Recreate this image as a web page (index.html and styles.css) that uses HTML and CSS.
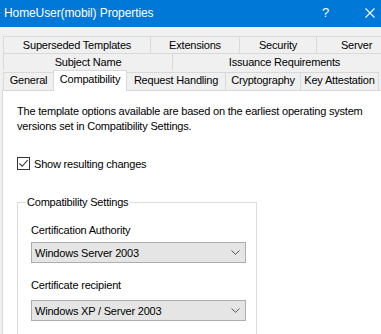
FILE: index.html
```html
<!DOCTYPE html>
<html lang="en">

<head>
    <meta charset="UTF-8">
    <meta name="viewport" content="width=device-width, initial-scale=1.0">
    <title>HomeUser(mobil) Properties</title>
    <link rel="stylesheet" href="styles.css">
</head>

<body>

    <div class="dialog">
        <div class="titlebar">
            <span class="title">HomeUser(mobil) Properties</span>
            <span class="help">?</span>
            <span class="close">
                <svg width="10" height="10" viewBox="0 0 10 10">
                    <path d="M0.5 0.5 L9.5 9.5 M9.5 0.5 L0.5 9.5" stroke="#fff" stroke-width="1.1" />
                </svg>
            </span>
        </div>

        <div class="tabs">
            <div class="tab-row">
                <div class="tab" style="width: 147px">Superseded Templates</div>
                <div class="tab" style="width: 89px">Extensions</div>
                <div class="tab" style="width: 77px">Security</div>
                <div class="tab" style="width: 80px">Server</div>
            </div>
            <div class="tab-row">
                <div class="tab" style="width: 169px">Subject Name</div>
                <div class="tab" style="width: 224px">Issuance Requirements</div>
            </div>
            <div class="tab-row front">
                <div class="tab" style="width: 50px">General</div>
                <div class="tab selected" style="width: 74px">Compatibility</div>
                <div class="tab" style="width: 98px">Request Handling</div>
                <div class="tab" style="width: 75px">Cryptography</div>
                <div class="tab" style="width: 79px">Key Attestation</div>
            </div>
        </div>

        <div class="panel">
            <p class="intro">The template options available are based on the earliest operating system<br>versions set in Compatibility Settings.</p>

            <label class="check">
                <span class="box">
                    <svg width="11" height="11" viewBox="0 0 11 11">
                        <path d="M1.5 5.5 L4.2 8.3 L9.6 2.2" fill="none" stroke="#333" stroke-width="1.1" />
                    </svg>
                </span>
                Show resulting changes
            </label>

            <fieldset class="group">
                <legend>Compatibility Settings</legend>

                <div class="field-label first">Certification Authority</div>
                <div class="combo">
                    <span>Windows Server 2003</span>
                    <svg width="9" height="5" viewBox="0 0 9 5">
                        <path d="M0.5 0.5 L4.5 4.3 L8.5 0.5" fill="none" stroke="#555" stroke-width="1" />
                    </svg>
                </div>

                <div class="field-label">Certificate recipient</div>
                <div class="combo">
                    <span>Windows XP / Server 2003</span>
                    <svg width="9" height="5" viewBox="0 0 9 5">
                        <path d="M0.5 0.5 L4.5 4.3 L8.5 0.5" fill="none" stroke="#555" stroke-width="1" />
                    </svg>
                </div>
            </fieldset>
        </div>
    </div>

</body>

</html>
```

FILE: styles.css
```css
body {
    margin: 0;
    width: 381px;
    height: 334px;
    overflow: hidden;
    background-color: #f0f0f0;
    font-family: "Liberation Sans", Arial, sans-serif;
    font-size: 11px;
    letter-spacing: -0.2px;
    color: #000000;
}

.dialog {
    width: 420px;
}

.titlebar {
    height: 27px;
    background-color: #0078d7;
    color: #ffffff;
    display: flex;
    align-items: center;
    padding-left: 4px;
}

.title {
    flex: 1;
    font-size: 12px;
    letter-spacing: -0.1px;
    margin-top: -2px;
}

.help {
    width: 43px;
    font-size: 13px;
    margin-top: -2px;
}

.close {
    width: 55px;
    display: flex;
    align-items: center;
    margin-top: -2px;
}

.tabs {
    padding: 9px 0 0 3px;
}

.tab-row {
    display: flex;
    height: 17px;
}

.tab {
    box-sizing: border-box;
    border: 1px solid #d9d9d9;
    border-right: none;
    border-bottom: none;
    text-align: center;
    line-height: 16px;
    white-space: nowrap;
    background-color: #f0f0f0;
}

.tab-row.front {
    height: 20px;
    align-items: flex-end;
}

.tab-row.front .tab {
    height: 18px;
    line-height: 15px;
}

.tab-row.front .tab.selected {
    height: 21px;
    margin-bottom: -1px;
    background-color: #ffffff;
    border-right: 1px solid #d9d9d9;
    position: relative;
    z-index: 1;
    line-height: 17px;
}

.tab-row.front .tab.selected + .tab {
    border-left: none;
}

.tab-row.front .tab:last-child {
    border-right: 1px solid #d9d9d9;
}

.panel {
    margin-left: 2px;
    background-color: #ffffff;
    border: 1px solid #d9d9d9;
    height: 300px;
    padding: 13px 0 0 14px;
}

.intro {
    margin: 0;
    line-height: 15px;
    white-space: nowrap;
}

.check {
    display: flex;
    align-items: center;
    height: 15px;
    margin-top: 22px;
    gap: 4px;
}

.box {
    box-sizing: border-box;
    width: 13px;
    height: 13px;
    border: 1px solid #333333;
    display: flex;
    align-items: center;
    justify-content: center;
}

.group {
    box-sizing: border-box;
    margin: 24px 0 0 0;
    width: 240px;
    border: 1px solid #dcdcdc;
    padding: 0 9px 20px 13px;
}

.group legend {
    line-height: 14px;
    padding: 0 1px;
    margin-left: -5px;
}

.field-label {
    line-height: 14px;
    margin-top: 15px;
    margin-bottom: 8px;
}

.field-label.first {
    margin-top: 14px;
    margin-bottom: 5px;
}

.combo {
    box-sizing: border-box;
    width: 215px;
    height: 21px;
    background-color: #e5e5e5;
    border: 1px solid #adadad;
    display: flex;
    align-items: center;
    justify-content: space-between;
    padding: 0 5px 0 3px;
}
```
